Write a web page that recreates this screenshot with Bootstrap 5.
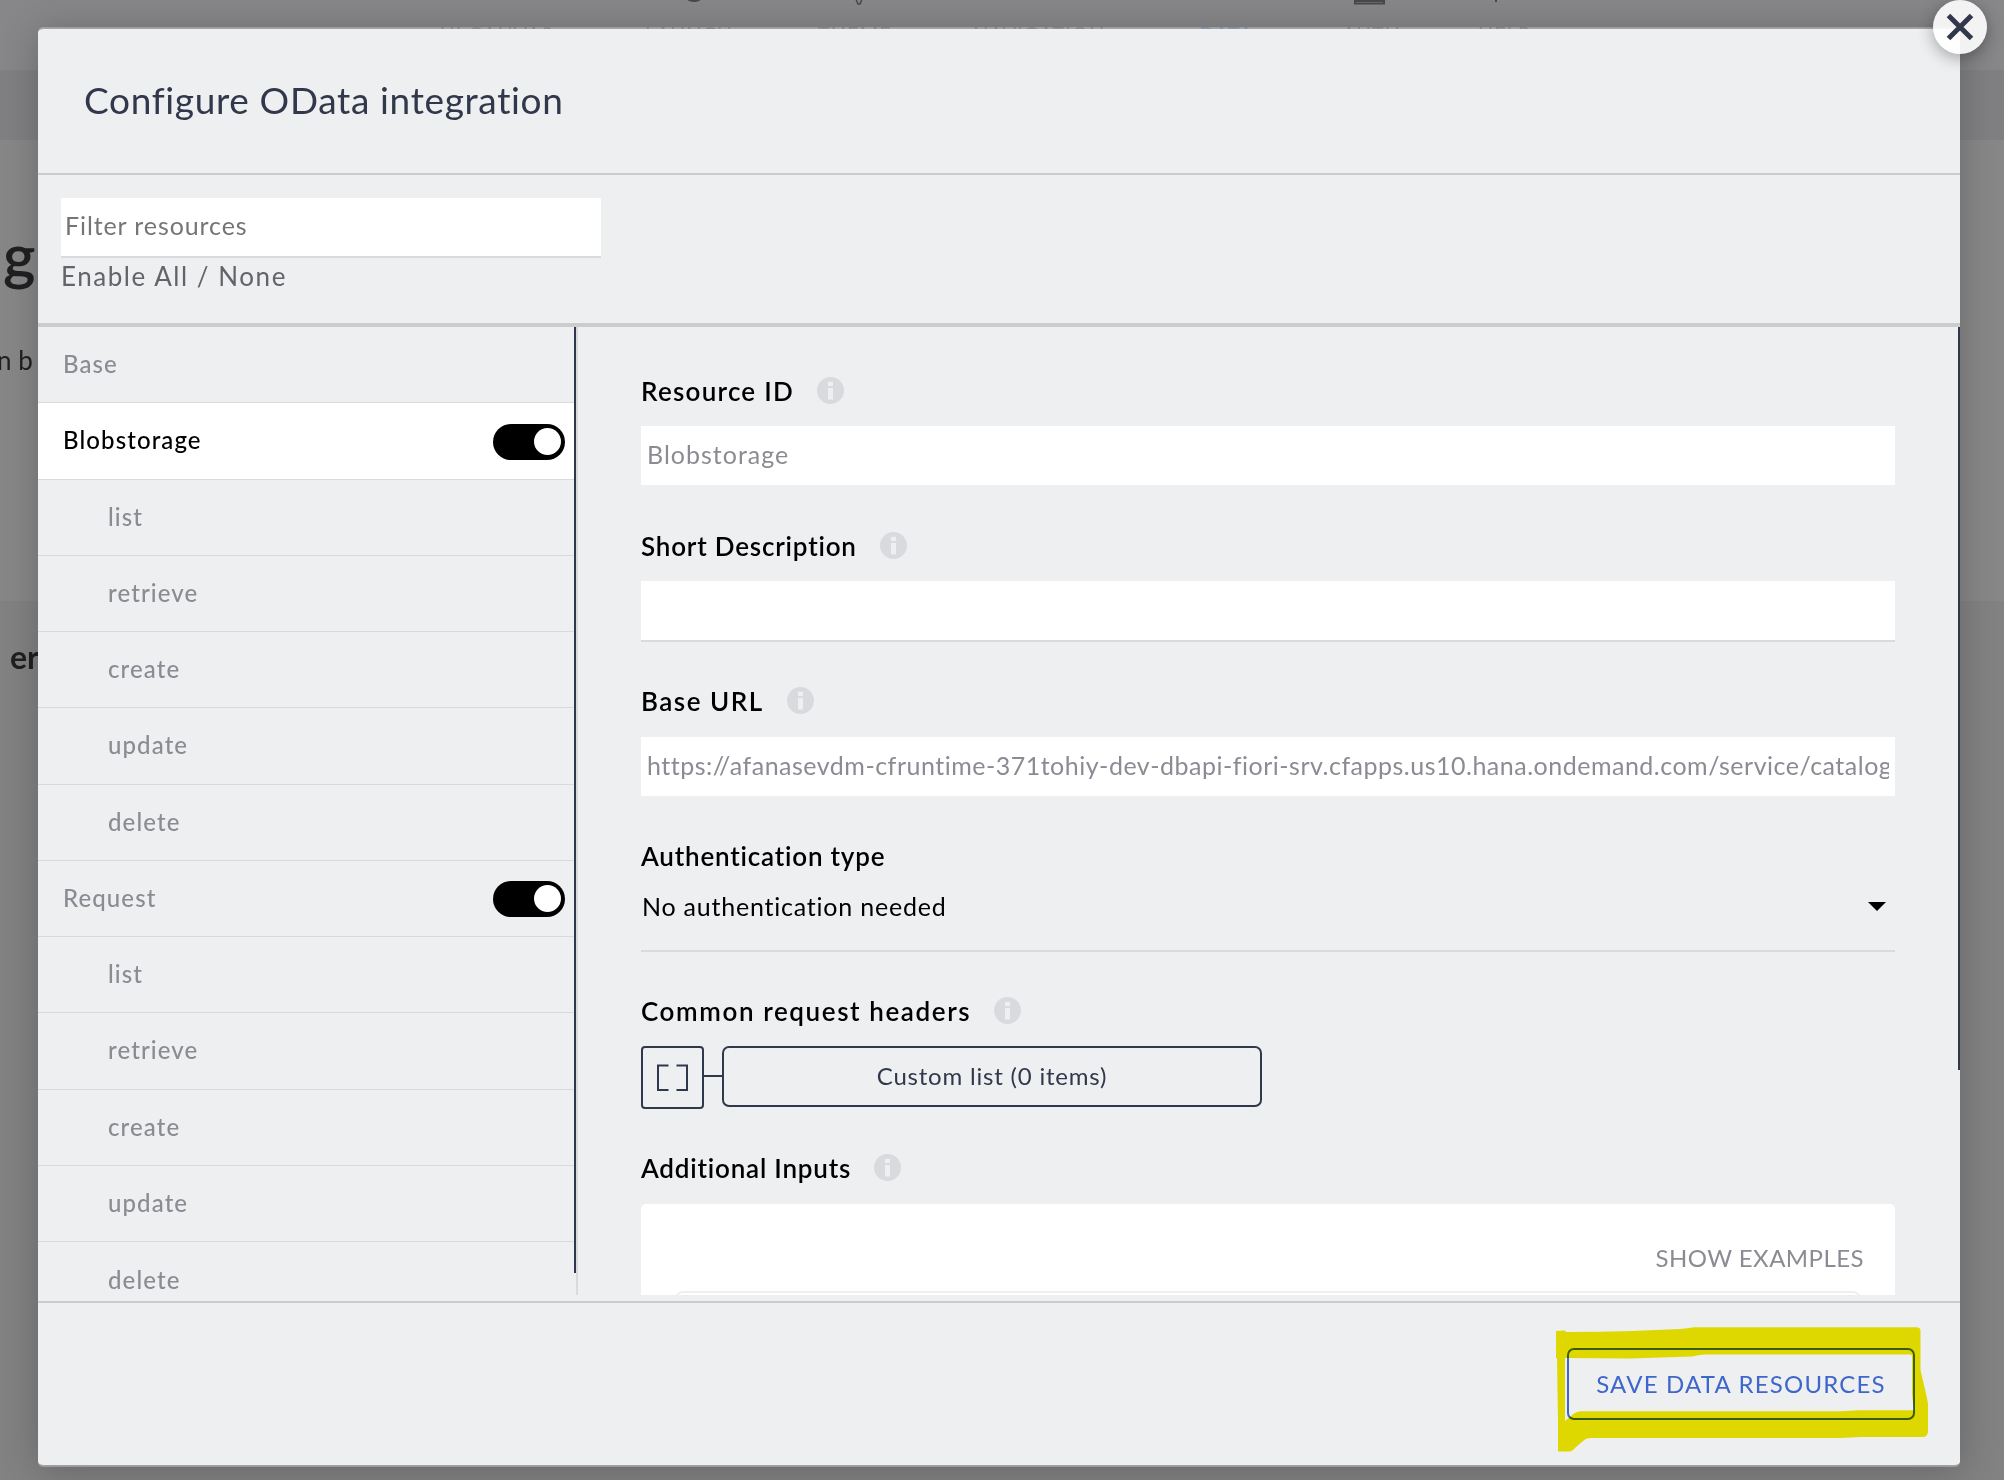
<!DOCTYPE html>
<html lang="en">
<head>
<meta charset="utf-8">
<meta name="viewport" content="width=device-width, initial-scale=1">
<title>Configure OData integration</title>
<link href="https://cdn.jsdelivr.net/npm/bootstrap@5.3.0/dist/css/bootstrap.min.css" rel="stylesheet">
<style>
:root { --ink: #31384b; --panel: #eeeff1; --rule: #d9dadd; --soft: #8b8c93; }
body { font-family: Lato, "Open Sans", sans-serif; width: 2004px; height: 1480px; background: #828283; color: #000; line-height: 1.2; }
/* page behind the dialog */
.bg-nav { height: 70px; background: #878789; }
.bg-nav svg { height: 6px; }
.bg-menu { padding: 17px 0 0 440px; font-size: 20px; line-height: 20px; color: #48484c; letter-spacing: 1px; }
.bg-menu .active { color: #33619c; }
.m1 { width: 205px } .m2 { width: 173px } .m3 { width: 155px } .m4 { width: 226px } .m5 { width: 143px } .m6 { width: 136px }
.bg-strip { height: 70px; background: #808082; }
.bg-hero { height: 461px; background: #878788; color: #202022; }
.bg-hero .big { font-size: 62px; font-weight: 600; line-height: 70px; padding: 80px 0 0 3px; }
.bg-hero .sub { font-size: 26px; line-height: 30px; padding: 55px 0 0 0; margin-left: -3px; }
.bg-rest { font-size: 32px; font-weight: 700; line-height: 40px; padding: 36px 0 0 10px; color: #202022; }
/* dialog */
.dlg { left: 38px; top: 27px; width: 1922px; height: 1440px; background: var(--panel); background-clip: padding-box; border: 0 solid rgba(190,185,185,.55); border-width: 2px 0; border-radius: 5px; box-shadow: 0 4px 38px rgba(0,0,0,.22); }
.dlg-head { height: 146px; border-bottom: 2px solid #cbcccd; padding: 0 46px 1px; font-size: 37px; color: var(--ink); letter-spacing: .65px; flex: none; }
.dlg-filter { height: 152px; border-bottom: 4px solid #cbcccd; padding: 23px 23px 0; flex: none; }
.flat-input { border: 0; border-radius: 0; background: #fff; color: var(--soft); font-size: 25px; line-height: 1.2; height: 59px; padding: 0 6px 4px; letter-spacing: 1px; }
.flat-input:disabled { background: #fff; color: var(--soft); }
.flat-input.lined { height: 61px; border-bottom: 2px solid var(--rule); }
.flat-input.filter { width: 540px; height: 60px; padding-left: 4px; letter-spacing: .9px; }
.flat-input::placeholder { color: #757575; opacity: 1; }
.url { letter-spacing: .5px; }
.enable-row { font-size: 26px; color: #636469; letter-spacing: 1.55px; padding-top: 3px; }
.dlg-body { height: 968px; flex: none; }
.tree { width: 540px; border-right: 2px solid var(--rule); flex: none; }
.tree .list-group { width: 536px; }
.tree-item { height: 76.25px; border: 0; border-bottom: 2px solid var(--rule); border-radius: 0; background: transparent; color: var(--soft); font-size: 24px; letter-spacing: 1.1px; padding: 0 9px 0 25px; flex: none; font-weight: 500; }
.tree-item.sub { padding-left: 70px; }
.tree-item.now { background: #fff; color: #000; }
.toggle { width: 72px; height: 36px; border-radius: 18px; background: #000; padding: 4px; position: relative; top: 1px; }
.toggle i { width: 27px; height: 27px; border-radius: 50%; background: #fff; }
.bar { width: 2px; background: var(--ink); flex: none; }
.bar-left { height: 946px; }
.bar-right { height: 743px; }
.detail { padding: 47px 63px 0 63px; }
.fld { height: 155px; flex: none; }
.fld.hdrs { height: 157px; }
.fld-label { height: 36px; font-size: 26px; font-weight: 600; flex: none; }
.fld-label svg { width: 27px; height: 27px; margin: 0 0 4px 23px; flex: none; }
.gap-in { margin-top: 16px; }
.gap-in17 { margin-top: 17px; }
.t10 { letter-spacing: 1px } .t13 { letter-spacing: 1.25px } .t16 { letter-spacing: 1.6px } .t8 { letter-spacing: .8px } .t15 { letter-spacing: 1.5px }
.picker { height: 77px; border-bottom: 2px solid var(--rule); font-size: 25px; letter-spacing: .78px; padding: 16px 9px 0 1px; }
.caret { width: 18px; height: 9px; margin-top: 11px; }
.mini { width: 63px; height: 63px; border: 2px solid var(--ink); border-radius: 4px; }
.link-line { width: 18px; height: 2px; background: var(--ink); margin-top: 29px; }
.custom { width: 540px; height: 61px; border: 2px solid var(--ink); border-radius: 7px; color: var(--ink); font-size: 24px; letter-spacing: .8px; padding: 0; line-height: 1.2; }
.extras { height: 200px; background: #fff; border-radius: 5px; padding: 39px 33px 0; flex: none; }
.extras .show-ex { color: var(--soft); font-size: 24px; letter-spacing: .45px; height: 48px; line-height: 30px; margin-right: -2px; }
.extras .well-in { height: 90px; border: 2px solid var(--panel); border-radius: 9px; }
.dlg-foot { margin-top: 6px; border-top: 2px solid #cbcccd; padding: 45px 45px 0; }
.save { width: 348px; height: 72px; border: 2px solid #3f66cb; border-radius: 7px; color: #3f66cb; font-size: 24px; letter-spacing: 1.2px; padding: 0; }
.marker { left: 1540px; top: 1310px; width: 400px; height: 160px; mix-blend-mode: multiply; pointer-events: none; }
.close-dot { left: 1933px; top: 0; width: 54px; height: 54px; border-radius: 50%; background: rgba(255,255,255,.9); box-shadow: 0 4px 16px rgba(0,0,0,.32); }
</style>
<script src="https://cdn.jsdelivr.net/npm/bootstrap@5.3.0/dist/js/bootstrap.bundle.min.js"></script>
</head>
<body class="position-relative overflow-hidden">

<svg class="d-none" aria-hidden="true">
  <symbol id="info" viewBox="0 0 27 27"><circle cx="13.5" cy="13.5" r="13.5" fill="#d9dadd"/><rect x="11" y="4.8" width="5" height="4.2" fill="#eeeff1"/><rect x="11" y="11" width="5" height="11.5" fill="#eeeff1"/></symbol>
</svg>

<div class="bg-page">
  <div class="bg-nav">
    <svg class="d-block w-100" viewBox="0 0 2004 6"><ellipse cx="694" cy="-1" rx="7" ry="3" fill="#48484c"/><path d="M855.500-2l2.500 6h2l2.500-6" fill="none" stroke="#48484c" stroke-width="1.500"/><path d="M1355-2v5.500h29V-2M1356 1h28" fill="none" stroke="#48484c" stroke-width="2"/><rect x="1495" y="0" width="2" height="2" fill="#48484c"/></svg>
    <div class="bg-menu d-flex text-nowrap">
      <span class="m1">UI CANVAS</span><span class="m2">LAUNCH</span><span class="m3">THEME</span><span class="m4">NAVIGATION</span><span class="m5 active">DATA</span><span class="m6">AUTH</span><span>HELP</span>
    </div>
  </div>
  <div class="bg-strip"></div>
  <div class="bg-hero"><div class="big">g</div><div class="sub">n b</div></div>
  <div class="bg-rest">er</div>
</div>

<div class="dlg position-absolute d-flex flex-column">
  <header class="dlg-head d-flex align-items-center">Configure OData integration</header>

  <div class="dlg-filter">
    <input class="form-control flat-input lined filter" placeholder="Filter resources">
    <div class="enable-row">Enable All / None</div>
  </div>

  <div class="dlg-body d-flex overflow-hidden">
    <nav class="tree d-flex overflow-hidden">
      <div class="list-group list-group-flush flex-shrink-0">
        <div class="list-group-item tree-item d-flex align-items-center">Base</div>
        <div class="list-group-item tree-item now d-flex align-items-center justify-content-between">Blobstorage<span class="toggle d-flex justify-content-end"><i></i></span></div>
        <div class="list-group-item tree-item sub d-flex align-items-center">list</div>
        <div class="list-group-item tree-item sub d-flex align-items-center">retrieve</div>
        <div class="list-group-item tree-item sub d-flex align-items-center">create</div>
        <div class="list-group-item tree-item sub d-flex align-items-center">update</div>
        <div class="list-group-item tree-item sub d-flex align-items-center">delete</div>
        <div class="list-group-item tree-item d-flex align-items-center justify-content-between">Request<span class="toggle d-flex justify-content-end"><i></i></span></div>
        <div class="list-group-item tree-item sub d-flex align-items-center">list</div>
        <div class="list-group-item tree-item sub d-flex align-items-center">retrieve</div>
        <div class="list-group-item tree-item sub d-flex align-items-center">create</div>
        <div class="list-group-item tree-item sub d-flex align-items-center">update</div>
        <div class="list-group-item tree-item sub d-flex align-items-center">delete</div>
      </div>
      <div class="bar bar-left"></div>
    </nav>

    <section class="detail flex-grow-1 d-flex flex-column overflow-hidden">
      <div class="fld">
        <div class="fld-label d-flex align-items-center"><span class="t13">Resource ID</span><svg><use href="#info"/></svg></div>
        <input class="form-control flat-input gap-in" value="Blobstorage" disabled>
      </div>
      <div class="fld">
        <div class="fld-label d-flex align-items-center"><span class="t8">Short Description</span><svg><use href="#info"/></svg></div>
        <input class="form-control flat-input lined gap-in">
      </div>
      <div class="fld">
        <div class="fld-label d-flex align-items-center"><span class="t15">Base URL</span><svg><use href="#info"/></svg></div>
        <input class="form-control flat-input url gap-in17" value="https://afanasevdm-cfruntime-371tohiy-dev-dbapi-fiori-srv.cfapps.us10.hana.ondemand.com/service/catalog" disabled>
      </div>
      <div class="fld">
        <div class="fld-label d-flex align-items-center"><span class="t8">Authentication type</span></div>
        <div class="picker d-flex justify-content-between"><span>No authentication needed</span><svg class="caret" viewBox="0 0 18 9"><path d="M0 0h18l-9 9z"/></svg></div>
      </div>
      <div class="fld hdrs">
        <div class="fld-label d-flex align-items-center"><span class="t16">Common request headers</span><svg><use href="#info"/></svg></div>
        <div class="d-flex align-items-start gap-in">
          <span class="mini d-flex align-items-center justify-content-center"><svg width="33" height="28" viewBox="0 0 33 28" fill="none" stroke="#31384b" stroke-width="2"><path d="M12.500 1.500H2V26h10.500M20.500 1.500H31V26H20.500"/></svg></span>
          <span class="link-line"></span>
          <button class="btn custom">Custom list (0 items)</button>
        </div>
      </div>
      <div class="fld-label d-flex align-items-center"><span class="t8">Additional Inputs</span><svg><use href="#info"/></svg></div>
      <div class="extras gap-in17">
        <div class="show-ex text-end">SHOW EXAMPLES</div>
        <div class="well-in"></div>
      </div>
    </section>
    <div class="bar bar-right"></div>
  </div>

  <footer class="dlg-foot d-flex justify-content-end"><button class="btn save">SAVE DATA RESOURCES</button></footer>
</div>

<!-- highlighter stroke round the save button -->
<svg class="marker position-absolute" viewBox="0 0 400 160"><path fill="#efe700" fill-rule="evenodd" d="M16 21 25 20.500 26 22Q60 22 92 21L140 19Q148 18.500 154 17.300H377Q380 17.500 380.500 20V60L387 88 388 94V122Q387 126.500 384 127H320L300 128H50Q46 128 43 131L36 137Q32 141.500 29 141.500H18V112L17 48H16ZM25 48V111L34 103.500Q38 101.300 41 101.300H300L320 100.300H374L372 84V46Q372 44.500 370 44.500H165Q158 45 152 46.500L90 48.500Z"/></svg>

<button class="close-dot position-absolute border-0 p-0 d-flex align-items-center justify-content-center" aria-label="Close">
  <svg width="28" height="28" viewBox="0 0 28 28" stroke="#31384b" stroke-width="5" fill="none"><path d="M2.500 2.500l23 23M25.500 2.500l-23 23"/></svg>
</button>

</body>
</html>
